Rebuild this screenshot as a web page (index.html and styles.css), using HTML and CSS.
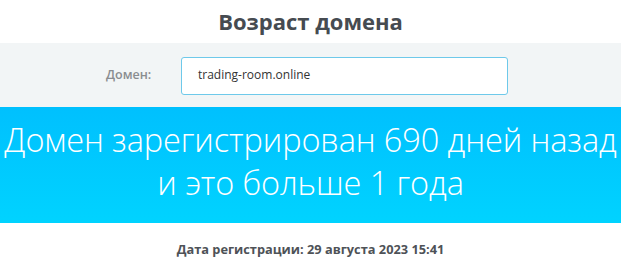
FILE: index.html
```html
<!DOCTYPE html>
<html lang="ru">
<head>
<meta charset="utf-8">
<link rel="stylesheet" href="styles.css">
</head>
<body>
<h1 class="title">Возраст домена</h1>
<div class="form-band">
  <label class="label" for="domain">Домен:</label>
  <div class="input">trading-room.online</div>
</div>
<div class="result">
  <p class="result-text">Домен зарегистрирован 690 дней назад<br>и это больше 1 года</p>
</div>
<p class="date">Дата регистрации: 29 августа 2023 15:41</p>
</body>
</html>
```
FILE: styles.css
```css
html, body { margin: 0; padding: 0; background: #fff; }
body { font-family: "Open Sans", "Noto Sans", sans-serif; width: 621px; height: 264px; overflow: hidden; }
.title {
  margin: 0;
  height: 43px;
  display: flex;
  align-items: center;
  justify-content: center;
  font-size: 22px;
  font-weight: 700;
  color: #464b51;
  padding-bottom: 2px;
  box-sizing: border-box;
}
.form-band {
  background: #f2f5f6;
  height: 64px;
  display: flex;
  align-items: center;
  padding-left: 106px;
  box-sizing: border-box;
}
.label {
  width: 75px;
  font-size: 12.5px;
  font-weight: 600;
  color: #8a8d90;
  padding-bottom: 2px;
}
.input {
  width: 327px;
  height: 38px;
  box-sizing: border-box;
  border: 1px solid #6ec9ea;
  border-radius: 3px;
  background: #fff;
  display: flex;
  align-items: center;
  padding-left: 16px;
  font-size: 12px;
  color: #333;
  padding-bottom: 2px;
  margin-top: 1px;
}
.result {
  height: 116px;
  background: linear-gradient(#00c0fe, #00d3ff);
  display: flex;
  align-items: center;
  justify-content: center;
  padding-bottom: 8px;
  box-sizing: border-box;
}
.result-text {
  margin: 0;
  text-align: center;
  color: #fff;
  font-weight: 300;
  font-size: 32.5px;
  line-height: 43px;
  letter-spacing: -0.1px;
  white-space: nowrap;
}
.date {
  margin: 0;
  text-align: center;
  padding-top: 17px;
  font-size: 12.8px;
  font-weight: 700;
  color: #4e5257;
}
```
